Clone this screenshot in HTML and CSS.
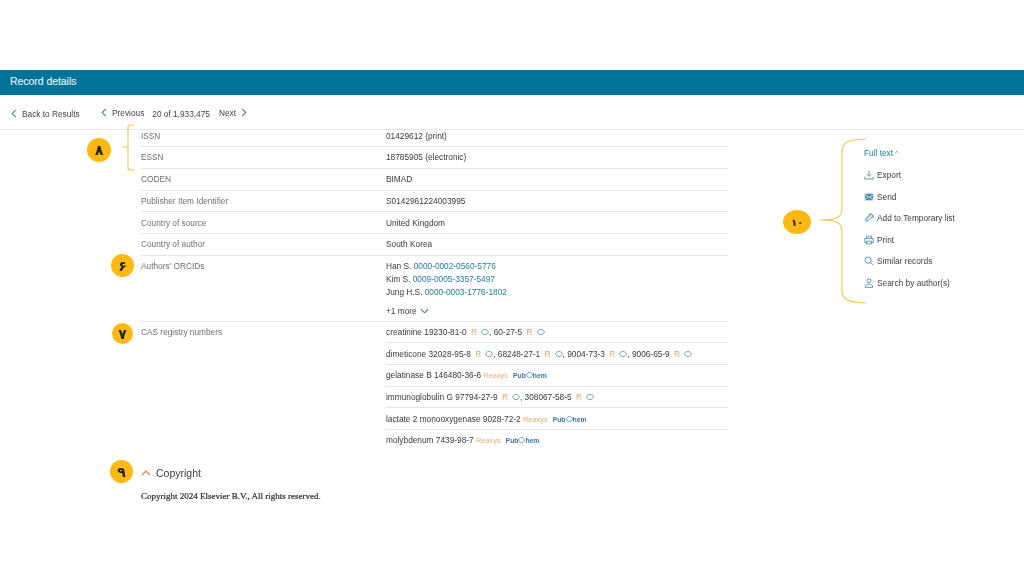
FILE: index.html
```html
<!DOCTYPE html>
<html lang="en">
<head>
<meta charset="utf-8">
<title>Record details</title>
<link rel="stylesheet" href="styles.css">
</head>
<body>
<svg width="0" height="0" class="defs">
  <symbol id="hex" viewBox="0 0 10 8" preserveAspectRatio="none"><path d="M3 .8h4L9.500 4 7 7.200H3L.5 4z" fill="none" stroke="#6f9dbd" stroke-width="1.200"/></symbol>
</svg>
<header class="bar"><h1 class="bar-title">Record details</h1></header>
<nav class="nav">
  <a class="nav-back"><svg class="chev" viewBox="0 0 6 10"><path d="M5 1 1 5l4 4"/></svg>Back to Results</a>
  <a class="nav-prev"><svg class="chev" viewBox="0 0 6 10"><path d="M5 1 1 5l4 4"/></svg>Previous</a>
  <span class="nav-count">20 of 1,933,475</span>
  <a class="nav-next">Next<svg class="chev" viewBox="0 0 6 10"><path d="M1 1l4 4-4 4"/></svg></a>
</nav>
<div class="content">
  <main class="details">
    <div class="row row-first"><div class="label">ISSN</div><div class="value">01429612 (print)</div></div>
    <div class="row"><div class="label">ESSN</div><div class="value">18785905 (electronic)</div></div>
    <div class="row"><div class="label">CODEN</div><div class="value">BIMAD</div></div>
    <div class="row"><div class="label">Publisher Item Identifier</div><div class="value">S0142961224003995</div></div>
    <div class="row"><div class="label">Country of source</div><div class="value">United Kingdom</div></div>
    <div class="row"><div class="label">Country of author</div><div class="value">South Korea</div></div>
    <div class="row row-orcid">
      <div class="label">Authors' ORCIDs</div>
      <div class="value orcids">
        <div>Han S. <a class="link">0000-0002-0560-5776</a></div>
        <div>Kim S. <a class="link">0009-0005-3357-5497</a></div>
        <div>Jung H.S. <a class="link">0000-0003-1776-1802</a></div>
        <div class="more">+1 more <svg class="more-chev" viewBox="0 0 10 6"><path d="M1 1l4 4 4-4"/></svg></div>
      </div>
    </div>
    <div class="row-cas">
      <div class="label">CAS registry numbers</div>
      <div class="cas-list">
        <div class="cas">creatinine 19230-81-0 <span class="r">R</span><svg class="hex"><use href="#hex"/></svg>, 60-27-5 <span class="r">R</span><svg class="hex"><use href="#hex"/></svg></div>
        <div class="cas">dimeticone 32028-95-8 <span class="r">R</span><svg class="hex"><use href="#hex"/></svg>, 68248-27-1 <span class="r">R</span><svg class="hex"><use href="#hex"/></svg>, 9004-73-3 <span class="r">R</span><svg class="hex"><use href="#hex"/></svg>, 9006-65-9 <span class="r">R</span><svg class="hex"><use href="#hex"/></svg></div>
        <div class="cas">gelatinase B 146480-36-6 <span class="reaxys">Reaxys</span><span class="pub">Pub<svg class="hex-s"><use href="#hex"/></svg>hem</span></div>
        <div class="cas">immunoglobulin G 97794-27-9 <span class="r">R</span><svg class="hex"><use href="#hex"/></svg>, 308067-58-5 <span class="r">R</span><svg class="hex"><use href="#hex"/></svg></div>
        <div class="cas">lactate 2 monooxygenase 9028-72-2 <span class="reaxys">Reaxys</span><span class="pub">Pub<svg class="hex-s"><use href="#hex"/></svg>hem</span></div>
        <div class="cas cas-last">molybdenum 7439-98-7 <span class="reaxys">Reaxys</span><span class="pub">Pub<svg class="hex-s"><use href="#hex"/></svg>hem</span></div>
      </div>
    </div>
    <section class="copyright">
      <h2 class="copy-title"><svg class="copy-chev" viewBox="0 0 10 6"><path d="M1 5l4-4 4 4"/></svg>Copyright</h2>
      <p class="copy-text">Copyright 2024 Elsevier B.V., All rights reserved.</p>
    </section>
  </main>
  <aside class="side">
    <a class="side-full">Full text <span class="caret">^</span></a>
    <a class="side-item"><svg class="ico" viewBox="0 0 12 12"><path d="M6 1v6.500M3.300 5 6 7.700 8.700 5M1 8v2.800h10V8"/></svg>Export</a>
    <a class="side-item"><svg class="ico" viewBox="0 0 12 12"><rect x="1" y="2" width="10" height="8" fill="#4d93ab" stroke="none"/><path d="M1 3l5 3.500L11 3M1 9.500 4.500 6M11 9.500 7.500 6" stroke="#fff" stroke-width=".8"/></svg>Send</a>
    <a class="side-item"><svg class="ico ico-clip" viewBox="0 0 12 12"><path d="M7.500 1.500 2 7c-1.800 1.800.8 4.300 2.600 2.500L10 4.200C11.300 2.900 9.300.8 8 2.200L3.500 6.800c-.8.800.3 1.800 1.100 1M5.500 1.500C8.500-.2 12.300 2 10.500 6.300"/></svg>Add to Temporary list</a>
    <a class="side-item"><svg class="ico" viewBox="0 0 12 12"><path d="M3 4V1.500h6V4M3 9H1V4.300h10V9H9M3 7.500h6v3.200H3z"/></svg>Print</a>
    <a class="side-item"><svg class="ico" viewBox="0 0 12 12"><circle cx="5" cy="5" r="3.700"/><path d="M7.700 7.700 11 11"/></svg>Similar records</a>
    <a class="side-item"><svg class="ico" viewBox="0 0 12 12"><circle cx="6" cy="3.300" r="2.300"/><path d="M1.300 11.200c0-5.200 9.400-5.200 9.400 0z"/></svg>Search by author(s)</a>
  </aside>
</div>

<svg class="brace brace-left" viewBox="0 0 20 50"><path d="M13 1H9Q7 1 7 3V23H1M7 23V44Q7 46 9 46H13"/></svg>
<svg class="brace brace-right" viewBox="0 0 50 168"><path d="M47 1C30 2 23 3 23 14V70C23 80 17 82 1 82C17 82 23 84 23 94V152C23 163 30 164 47 165"/></svg>
<span class="badge badge-8">۸</span>
<span class="badge badge-6">۶</span>
<span class="badge badge-7">۷</span>
<span class="badge badge-9">۹</span>
<span class="badge badge-10">۱۰</span>
</body>
</html>
```
FILE: styles.css
```css
* { box-sizing: border-box; }
html, body { margin: 0; padding: 0; }
body {
  width: 1024px;
  height: 576px;
  overflow: hidden;
  background: #fff;
  font-family: "Liberation Sans", Arial, sans-serif;
  font-size: 8.3px;
  color: #3c3c3c;
  padding-top: 70px;
  position: relative;
  filter: blur(.3px);
}
.defs { position: absolute; }

.bar {
  height: 25px;
  background: #007398;
  display: flex;
  align-items: center;
  padding: 0 0 3px 10px;
}
.bar-title { margin: 0; font-size: 10.4px; font-weight: 400; color: #e6f2f6; -webkit-text-stroke: .15px #e6f2f6; }

.nav {
  height: 35px;
  display: flex;
  align-items: center;
  border-bottom: 1px solid #e6e6e6;
  padding: 3px 0 0 11px;
  color: #404040;
}
.chev { width: 6px; height: 9px; fill: none; stroke: #4a8299; stroke-width: 1.200; flex: none; }
.nav-back { display: flex; align-items: center; gap: 5px; width: 90px; }
.nav-prev { display: flex; align-items: center; gap: 5px; position: relative; top: -1px; }
.nav-count { margin-left: 8px; }
.nav-next { display: flex; align-items: center; gap: 5px; margin-left: 9px; position: relative; top: -1px; }

.content { display: flex; padding-left: 141px; }
.details { width: 587px; }

.row {
  display: grid;
  grid-template-columns: 245px 1fr;
  height: 21.75px;
  padding-top: 4.25px;
  line-height: 12px;
  border-bottom: 1px solid #e4e4e4;
}
.row-first { height: 17px; padding-top: 0; }
.label { color: #6e6e6e; }
.value { color: #383838; }
.row-orcid { height: 66px; }
.orcids > div { height: 13px; line-height: 12px; }
.link { color: #1f7a9c; }
.orcids .more { margin-top: 5px; display: flex; align-items: center; gap: 3px; }
.more-chev { width: 9px; height: 6px; fill: none; stroke: #2f7f9c; stroke-width: 1.200; }

.row-cas { display: grid; grid-template-columns: 245px 1fr; line-height: 12px; }
.row-cas > .label { padding-top: 4.500px; }
.cas { height: 21.6px; padding-top: 4.5px; border-bottom: 1px solid #e4e4e4; white-space: nowrap; color: #383838; }
.cas-last { border-bottom: 0; }
.r { color: #e0a76a; margin-left: 2px; }
.hex { width: 8px; height: 6px; margin-left: 4px; vertical-align: 0; }
.reaxys { color: #e3ad78; font-size: 7.4px; }
.pub { color: #3f73a3; font-size: 6.8px; margin-left: 5px; font-weight: 700; }
.hex-s { width: 7px; height: 6px; vertical-align: 0; }

.copyright { margin-top: 15px; }
.copy-title { margin: 0; display: flex; align-items: center; gap: 5px; font-size: 10.5px; font-weight: 400; line-height: 14px; color: #404040; }
.copy-chev { width: 10px; height: 6px; fill: none; stroke: #d58a45; stroke-width: 1.200; }
.copy-text { margin: 11px 0 0; font-family: "Liberation Serif", serif; font-size: 9px; font-weight: 400; line-height: 11px; color: #2a2a2a; -webkit-text-stroke: .2px #2a2a2a; }

.side { margin-left: 136px; padding-top: 16px; display: flex; flex-direction: column; }
.side-full { color: #1f7a9c; height: 21.7px; line-height: 14px; }
.caret { font-size: 6px; vertical-align: 1px; }
.side-item { display: flex; align-items: center; gap: 3px; height: 21.6px; color: #404040; white-space: nowrap; padding-bottom: 7px; }
.ico { width: 10px; height: 10px; fill: none; stroke: #4d8fa8; stroke-width: 1.100; flex: none; }

.brace { position: absolute; fill: none; stroke: #f3c64a; stroke-width: 1.200; }
.brace-left { left: 121px; top: 124px; width: 20px; height: 50px; }
.brace-right { left: 819px; top: 138px; width: 50px; height: 168px; }

.badge {
  position: absolute;
  display: flex;
  align-items: center;
  justify-content: center;
  border-radius: 50%;
  background: #fdb913;
  color: #222;
  font-family: "DejaVu Sans", sans-serif;
  font-size: 14px;
  font-weight: 700;
}
.badge-8 { left: 87px; top: 138px; width: 24px; height: 24px; }
.badge-6 { left: 111px; top: 254px; width: 23px; height: 23px; }
.badge-7 { left: 112px; top: 323px; width: 21px; height: 21px; }
.badge-9 { left: 110px; top: 460px; width: 23px; height: 23px; }
.badge-10 { left: 783px; top: 210px; width: 28px; height: 24px; font-size: 10px; }
```
